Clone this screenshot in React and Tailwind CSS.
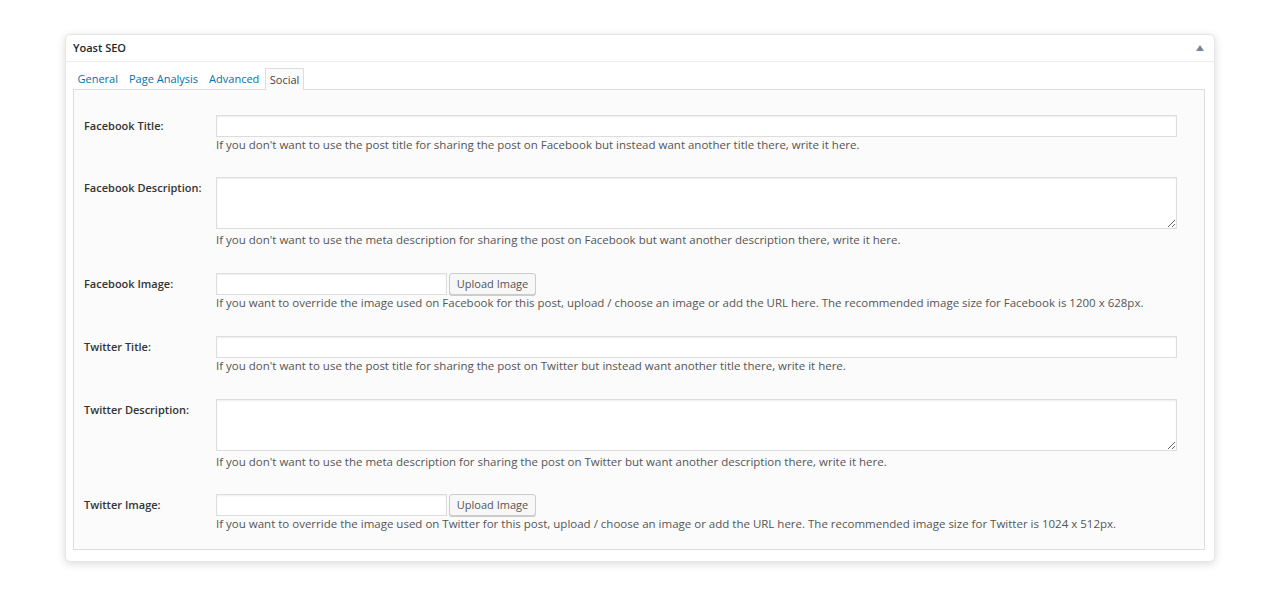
import React from "react";

const rows = [
  {
    label: "Facebook Title:",
    type: "text",
    gap: "mt-0",
    help: "If you don't want to use the post title for sharing the post on Facebook but instead want another title there, write it here.",
  },
  {
    label: "Facebook Description:",
    type: "textarea",
    gap: "mt-[24px]",
    help: "If you don't want to use the meta description for sharing the post on Facebook but want another description there, write it here.",
  },
  {
    label: "Facebook Image:",
    type: "image",
    gap: "mt-[25px]",
    help: "If you want to override the image used on Facebook for this post, upload / choose an image or add the URL here. The recommended image size for Facebook is 1200 x 628px.",
  },
  {
    label: "Twitter Title:",
    type: "text",
    gap: "mt-[25px]",
    help: "If you don't want to use the post title for sharing the post on Twitter but instead want another title there, write it here.",
  },
  {
    label: "Twitter Description:",
    type: "textarea",
    gap: "mt-[25px]",
    help: "If you don't want to use the meta description for sharing the post on Twitter but want another description there, write it here.",
  },
  {
    label: "Twitter Image:",
    type: "image",
    gap: "mt-[24px]",
    help: "If you want to override the image used on Twitter for this post, upload / choose an image or add the URL here. The recommended image size for Twitter is 1024 x 512px.",
  },
];

function Field({ row }) {
  if (row.type === "textarea") {
    return (
      <textarea className="block w-full h-[52px] mb-[3px] resize-y border border-[#dddddd] bg-white shadow-[inset_0_1px_2px_rgba(0,0,0,0.07)] outline-none" />
    );
  }
  if (row.type === "image") {
    return (
      <div className="flex items-center gap-[2px]">
        <input
          type="text"
          className="w-[231px] h-[22px] border border-[#dddddd] bg-white shadow-[inset_0_1px_2px_rgba(0,0,0,0.07)] outline-none"
        />
        <button className="h-[22px] w-[87px] rounded-[3px] border border-[#cccccc] bg-[#f7f7f7] text-[11px] text-[#555555] leading-[20px] shadow-[0_1px_0_#ccc]">
          Upload Image
        </button>
      </div>
    );
  }
  return (
    <input
      type="text"
      className="block w-full h-[22px] border border-[#dddddd] bg-white shadow-[inset_0_1px_2px_rgba(0,0,0,0.07)] outline-none"
    />
  );
}

export default function App() {
  const tabs = ["General", "Page Analysis", "Advanced"];
  return (
    <div className="min-h-[597px] bg-white pt-[34px] px-[65px] font-['Open_Sans',sans-serif]">
      <div className="w-[1150px] rounded-[5px] border border-[#e5e5e5] bg-white shadow-[0_2px_9px_rgba(0,0,0,0.14)]">
        <div className="flex items-center justify-between h-[27px] px-[7px] border-b border-[#eeeeee]">
          <h2 className="text-[11px] font-semibold text-[#23282d]">Yoast SEO</h2>
          <svg width="8" height="6" viewBox="0 0 8 6" className="mr-[3px]">
            <path d="M4 0 L8 6 L0 6 Z" fill="#7b8694" />
          </svg>
        </div>
        <div className="pl-[7px] pr-[9px] pb-[11px]">
          <div className="flex items-end h-[27px] -ml-px">
            {tabs.map((t) => (
              <a
                key={t}
                className="px-[5.5px] h-[21px] leading-[21px] text-[11px] text-[#0073aa] cursor-pointer"
              >
                {t}
              </a>
            ))}
            <span className="relative -mb-px px-[4px] h-[22px] leading-[21px] text-[11px] text-[#444444] border border-b-0 border-[#dddddd] bg-[#fbfbfb]">
              Social
            </span>
          </div>
          <div className="border border-[#dddddd] bg-[#fbfbfb] pt-[25px] pb-[17px] pl-[10px] pr-[27px] flex flex-col">
            {rows.map((row) => (
              <div key={row.label} className={"flex " + row.gap}>
                <label className="w-[132px] shrink-0 pt-[3px] leading-[16px] text-[11px] font-semibold text-[#333333]">
                  {row.label}
                </label>
                <div className="flex-1">
                  <Field row={row} />
                  <p className="leading-[16px] text-[11.5px] text-[#555555]">{row.help}</p>
                </div>
              </div>
            ))}
          </div>
        </div>
      </div>
    </div>
  );
}
